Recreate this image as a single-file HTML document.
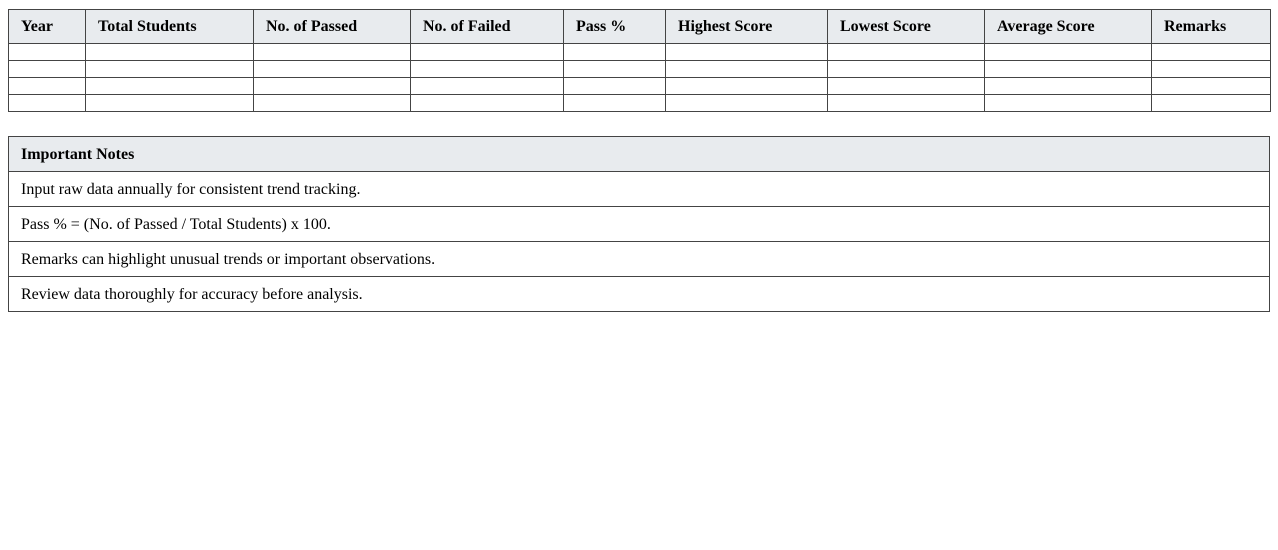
<!DOCTYPE html>
<html><head><meta charset="utf-8"><style>
body{margin:0;background:#fff;font-family:"Liberation Serif",serif;font-size:16px;color:#000}
table{border-collapse:collapse;table-layout:fixed;position:absolute;left:8px}
td,th{border:1px solid #444;padding:0 12px;text-align:left;overflow:hidden;white-space:nowrap}
th{background:#e8ebee;font-weight:bold;height:33px}
#t1{top:9px;width:1262px}
#t1 td{height:16px;padding:0}
#t2{top:136px;width:1262px}
#t2 th,#t2 td{height:32px;padding-top:2px}
</style></head><body>
<table id="t1">
<colgroup><col style="width:77px"><col style="width:168px"><col style="width:157px"><col style="width:153px"><col style="width:102px"><col style="width:162px"><col style="width:157px"><col style="width:167px"><col style="width:119px"></colgroup>
<tr><th>Year</th><th>Total Students</th><th>No. of Passed</th><th>No. of Failed</th><th>Pass %</th><th>Highest Score</th><th>Lowest Score</th><th>Average Score</th><th>Remarks</th></tr>
<tr><td></td><td></td><td></td><td></td><td></td><td></td><td></td><td></td><td></td></tr>
<tr><td></td><td></td><td></td><td></td><td></td><td></td><td></td><td></td><td></td></tr>
<tr><td></td><td></td><td></td><td></td><td></td><td></td><td></td><td></td><td></td></tr>
<tr><td></td><td></td><td></td><td></td><td></td><td></td><td></td><td></td><td></td></tr>
</table>
<table id="t2">
<tr><th>Important Notes</th></tr>
<tr><td>Input raw data annually for consistent trend tracking.</td></tr>
<tr><td>Pass % = (No. of Passed / Total Students) x 100.</td></tr>
<tr><td>Remarks can highlight unusual trends or important observations.</td></tr>
<tr><td>Review data thoroughly for accuracy before analysis.</td></tr>
</table>
</body></html>
